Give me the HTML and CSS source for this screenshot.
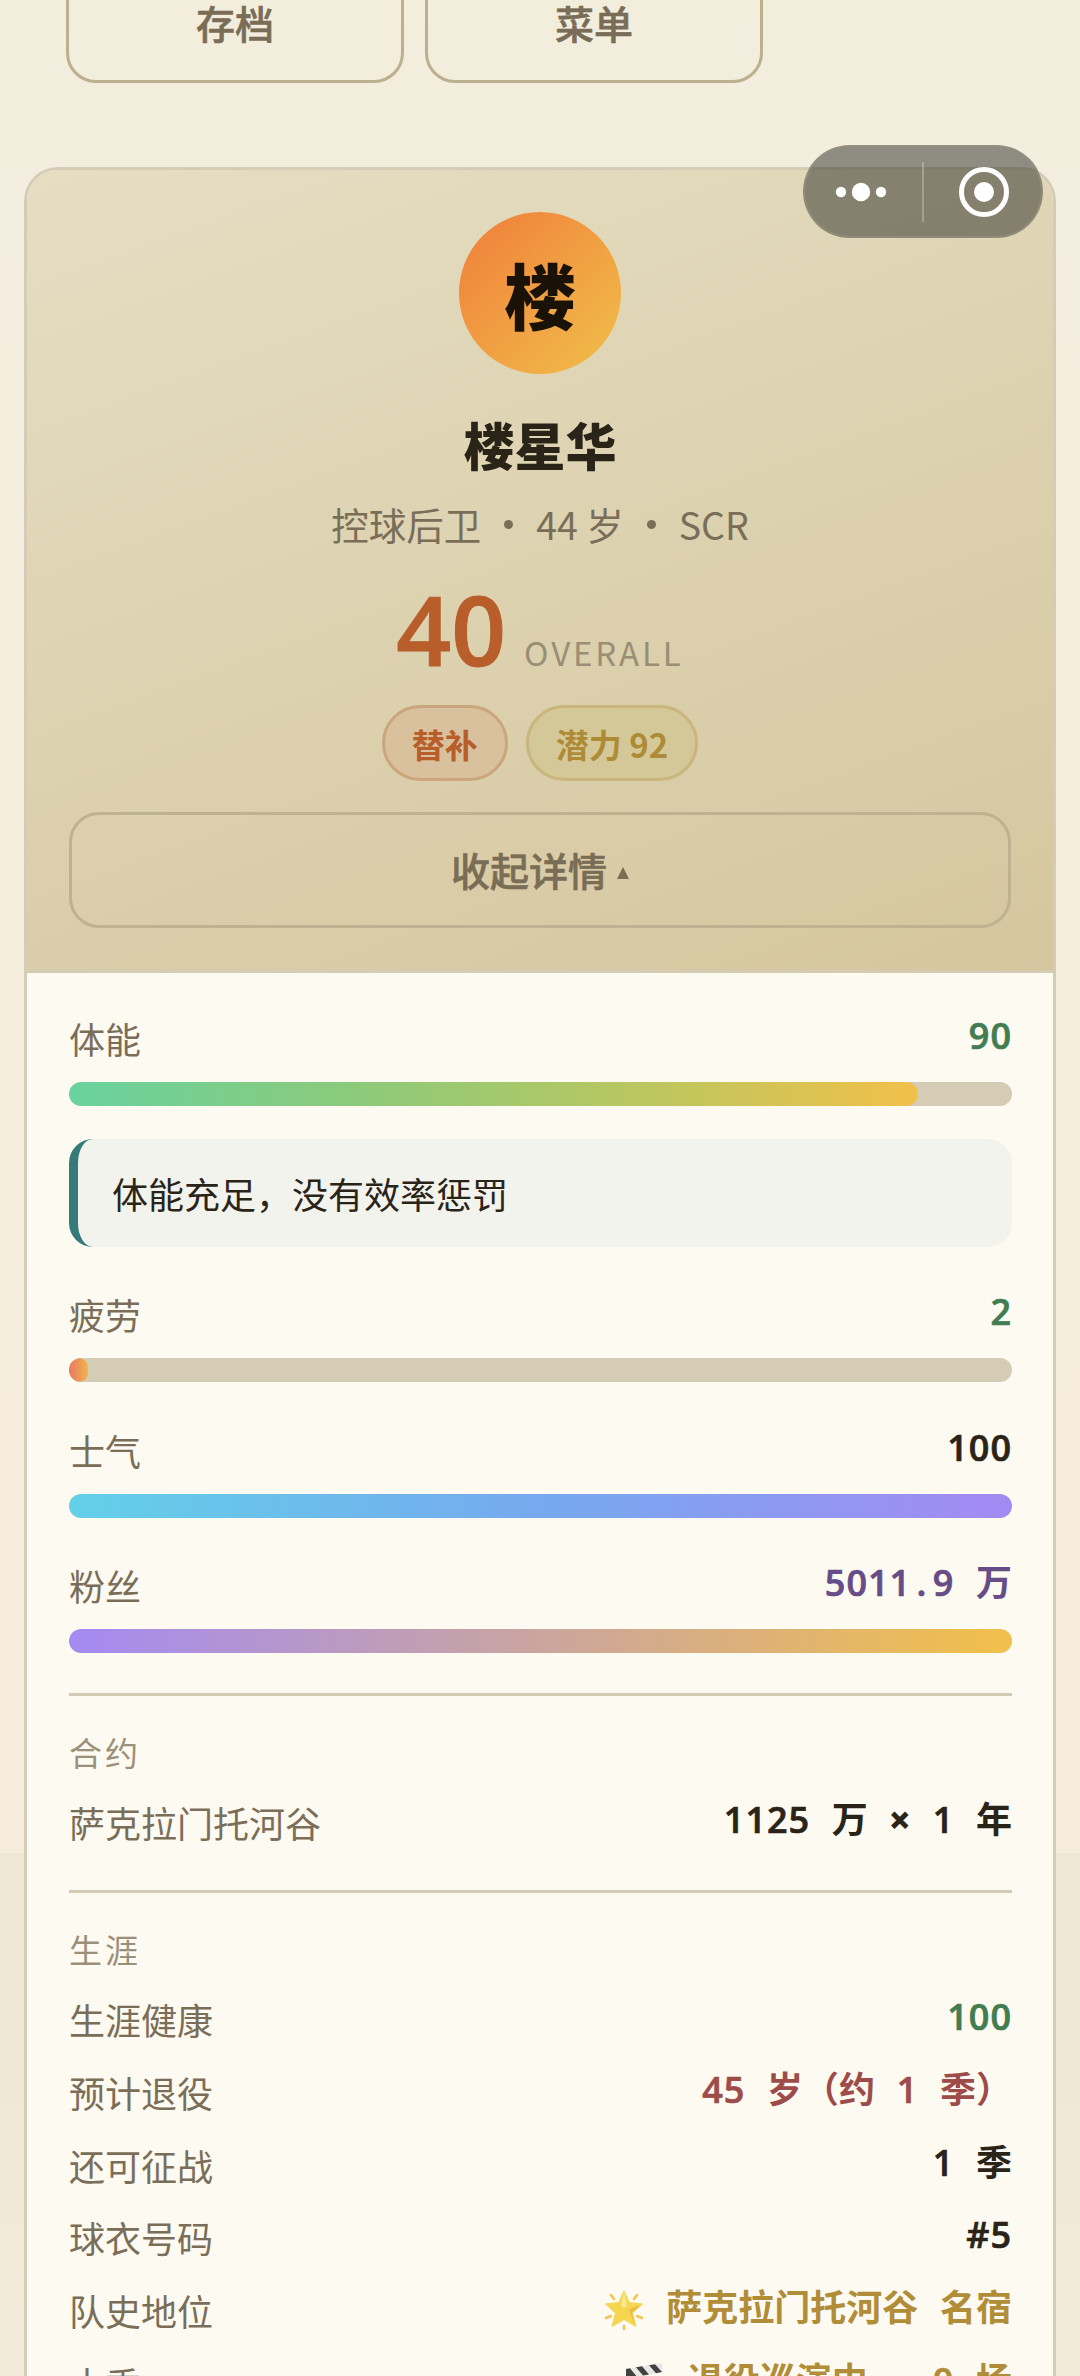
FILE: index.html
```html
<!DOCTYPE html>
<html lang="zh-CN">
<head>
<meta charset="utf-8">
<title>球员详情</title>
<link rel="stylesheet" href="styles.css">
</head>
<body>
<main class="page">
  <nav class="actions">
    <button class="action">存档</button>
    <button class="action">菜单</button>
  </nav>

  <section class="card">
    <header class="hero">
      <div class="avatar">楼</div>
      <h1 class="name">楼星华</h1>
      <p class="meta">控球后卫<i class="dot"></i>44 岁<i class="dot"></i>SCR</p>
      <div class="rating"><span class="score">40</span><span class="score-label">OVERALL</span></div>
      <div class="tags"><span class="tag tag-role">替补</span><span class="tag tag-potential">潜力 92</span></div>
      <button class="toggle">收起详情<svg class="caret" viewBox="0 0 12 12"><path d="M6 0 12 12H0Z"/></svg></button>
    </header>

    <div class="details">
      <div class="stat"><div class="row"><span class="label">体能</span><span class="value green"><b>90</b></span></div>
        <div class="bar"><div class="fill energy" style="width:90%"></div></div></div>
      <p class="notice">体能充足，没有效率惩罚</p>
      <div class="stat"><div class="row"><span class="label">疲劳</span><span class="value green"><b>2</b></span></div>
        <div class="bar"><div class="fill fatigue" style="width:2%"></div></div></div>
      <div class="stat"><div class="row"><span class="label">士气</span><span class="value"><b>100</b></span></div>
        <div class="bar"><div class="fill morale" style="width:100%"></div></div></div>
      <div class="stat"><div class="row"><span class="label">粉丝</span><span class="value purple"><b>5011<span class="point">.</span>9</b> 万</span></div>
        <div class="bar"><div class="fill fans" style="width:100%"></div></div></div>

      <section class="group">
        <h2 class="group-title">合约</h2>
        <div class="row"><span class="label">萨克拉门托河谷</span><span class="value"><b>1125</b> 万 <b class="times">×</b> <b>1</b> 年</span></div>
      </section>

      <section class="group">
        <h2 class="group-title">生涯</h2>
        <div class="row"><span class="label">生涯健康</span><span class="value green"><b>100</b></span></div>
        <div class="row"><span class="label">预计退役</span><span class="value red"><b>45</b> 岁（约 <b>1</b> 季）</span></div>
        <div class="row"><span class="label">还可征战</span><span class="value"><b>1</b> 季</span></div>
        <div class="row"><span class="label">球衣号码</span><span class="value"><b>#5</b></span></div>
        <div class="row"><span class="label">队史地位</span><span class="value gold"><svg class="emoji" viewBox="0 0 42 42"><g stroke="#efc653" stroke-width="2.600" stroke-linecap="round"><path d="M8 6l3 4M34 6l-3 4M3 29l5-2M39 29l-5-2M21 37v3"/></g><path d="M21 2l5.200 11.500 13.300 1.500-10 9 3.500 13.500-12-7-12 7 3.500-13.500-10-9 13.300-1.500Z" fill="#f6d54f" stroke="#f6d54f" stroke-linejoin="round"/><path d="M21 3l3 13-3 3-3-3Z" fill="#fcea93"/><path d="M38 15.500l-12 5 6 16-3-13Z" fill="#e9bb48"/></svg> 萨克拉门托河谷 名宿</span></div>
        <div class="row"><span class="label">本季</span><span class="value gold"><svg class="emoji" viewBox="0 0 42 42"><path d="M2 7 38 1l1 9L2 17Z" fill="#e8e8e6"/><path d="M2 7l4-.7 7 8.500L2 17Z M12 5.300l6-1 7 8.300-6 1Z M25 3.200l6-1 7 7.800-6 1.200Z" fill="#424242"/><path d="M2 17h38v24H2Z" fill="#424242"/><path d="M9 17h6l-4 7H5Z M22 17h6l-4 7h-6Z M35 17h5l-4 7h-5Z" fill="#e8e8e6"/></svg> 退役巡演中 <span class="point">·</span> <b>0</b> 场</span></div>
      </section>
    </div>
  </section>
</main>

<div class="capsule">
  <svg class="more" viewBox="0 0 52 20"><circle cx="6" cy="10" r="5.200"/><circle cx="26" cy="10" r="9.200"/><circle cx="46" cy="10" r="5.200"/></svg>
  <span class="divider"></span>
  <svg class="close" viewBox="0 0 52 52"><circle cx="26" cy="26" r="22.500" fill="none" stroke="#fff" stroke-width="5"/><circle cx="26" cy="26" r="10"/></svg>
</div>
</body>
</html>
```
FILE: styles.css
```css
* { box-sizing: border-box; }
html { background: #f0e9d8; }
body {
  margin: 0;
  height: 2376px;
  overflow: hidden;
  position: relative;
  color: #2a2418;
  font-family: "Noto Sans CJK SC", sans-serif;
  background: linear-gradient(180deg, #f3eddc 0, #f4eee0 200px, #f4ecdc 1000px, #f5ecde 1853px, #eee7d5 1853px, #f2eada 2376px);
}
h1, h2, p { margin: 0; font-weight: 400; }
button { font: inherit; background: none; }

.page { height: 2376px; padding: 0 24px; overflow: hidden; }
.actions { display: flex; gap: 21px; padding: 0 42px; height: 83px; align-items: flex-end; }
.action {
  width: 338px;
  height: 120px;
  padding: 0 0 2px;
  border: 3px solid #bcb08e;
  border-radius: 30px;
  color: #796d58;
  font-size: 39px;
  font-weight: 500;
  -webkit-text-stroke: .6px;
}

.card {
  margin-top: 84px;
  height: 2260px;
  border: 3px solid #d5ccb5;
  border-bottom: 0;
  border-radius: 34px 34px 0 0;
  background: #fdfaf2;
  overflow: hidden;
}
.hero {
  display: flex;
  flex-direction: column;
  align-items: center;
  height: 803px;
  padding: 42px 42px 0;
  border-bottom: 3px solid #d5ccb5;
  background: linear-gradient(160deg, #e5dec3, #ddd2b0 50%, #d5c69e);
}
.avatar {
  width: 162px;
  height: 162px;
  border-radius: 50%;
  background: linear-gradient(135deg, #f07d3a, #f1c04a);
  color: #1a1206;
  font-size: 72px;
  font-weight: 900;
  line-height: 161px;
  text-align: center;
}
.name { margin-top: 32px; font-size: 51px; line-height: 76px; font-weight: 900; }
.meta { display: flex; align-items: center; margin-top: 14px; font-size: 37.500px; line-height: 56px; color: #7a6e59; }
.dot { width: 9px; height: 9px; margin: 0 23px; border-radius: 50%; background: currentColor; }
.rating { display: flex; align-items: baseline; gap: 18px; margin-top: 24px; height: 105px; line-height: 105px; }
.score { font-family: "Open Sans", "Noto Sans", sans-serif; font-size: 96px; font-weight: 600; color: #b85e2b; -webkit-text-stroke: 1px; }
.score-label { font-size: 33px; letter-spacing: 2.900px; color: #9a8e75; }
.tags { display: flex; gap: 18px; margin-top: 24px; }
.tag { height: 76px; padding: 0 27px; border: 3px solid; border-radius: 38px; font-size: 33px; font-weight: 700; line-height: 72px; }
.tag-role { color: #b85e2b; background: #d9c19d; border-color: #cba67d; }
.tag-potential { color: #ae8b37; background: #d4c898; border-color: #cab67c; }
.toggle {
  display: flex;
  align-items: center;
  justify-content: center;
  gap: 10px;
  width: 942px;
  height: 116px;
  margin-top: 31px;
  padding: 0 0 2px;
  border: 3px solid #bfb291;
  border-radius: 30px;
  color: #796d55;
  font-size: 39px;
  font-weight: 500;
  -webkit-text-stroke: .6px;
}
.caret { width: 12px; height: 12px; margin-top: 8px; fill: currentColor; }

.details { padding: 35px 41px 0 42px; }
.row { display: flex; justify-content: space-between; height: 72.700px; }
.label { font-size: 36px; line-height: 60px; color: #7a6e59; }
.value {
  height: 55px;
  white-space: pre;
  font-family: "Open Sans", "Noto Sans", "Noto Sans CJK SC", sans-serif;
  font-size: 36px;
  font-weight: 600;
  line-height: 55px;
  word-spacing: 12.300px;
}
.value b { font-weight: 600; letter-spacing: 1px; -webkit-text-stroke: .7px; }
.value .times { font-weight: 700; -webkit-text-stroke: 1px; }
.point { display: inline-block; width: 21.600px; text-align: center; }
.green { color: #427c51; }
.purple { color: #664d88; }
.red { color: #9e4c4a; }
.gold { color: #b18d38; }
.emoji { width: 42px; height: 42px; vertical-align: -10px; }

.stat { height: 135.700px; }
.stat .row { height: 74px; }
.bar { height: 24px; border-radius: 12px; background: #d5ccb5; overflow: hidden; }
.fill { height: 24px; border-radius: 12px; }
.energy { background: linear-gradient(90deg, #69d29f, #8bca7b 33%, #b8c761 66%, #f2c04a); }
.fatigue { background: linear-gradient(90deg, #e87864, #f2b54a); }
.morale { background: linear-gradient(90deg, #63d0e8, #76a9ef 50%, #a48af3); }
.fans { background: linear-gradient(90deg, #a48af3, #f2c04a); }
.notice {
  height: 108px;
  margin: -5px 0 37.300px;
  padding-left: 34px;
  border-left: 9px solid #357b79;
  border-radius: 24px;
  background: #f2f3ed;
  font-size: 36px;
  line-height: 108px;
}
.group { margin-top: 1.500px; border-top: 3px solid #d3cbb6; padding-top: 28px; margin-bottom: 25px; }
.group-title { font-size: 33px; line-height: 57px; height: 68.500px; letter-spacing: 3px; color: #9b907a; }

/* Floating mini-program control */
.capsule {
  position: absolute;
  top: 145px;
  left: 803px;
  display: flex;
  align-items: center;
  width: 240px;
  height: 93px;
  padding-left: 30px;
  border: 2px solid rgba(150, 145, 125, .7);
  border-radius: 47px;
  background: rgba(50, 49, 44, .52);
}
.capsule svg { fill: #fff; }
.more { width: 52px; height: 20px; }
.divider { width: 2px; height: 60px; margin: 0 34px 0 35px; background: rgba(255, 255, 255, .25); }
.close { width: 52px; height: 52px; }
```
